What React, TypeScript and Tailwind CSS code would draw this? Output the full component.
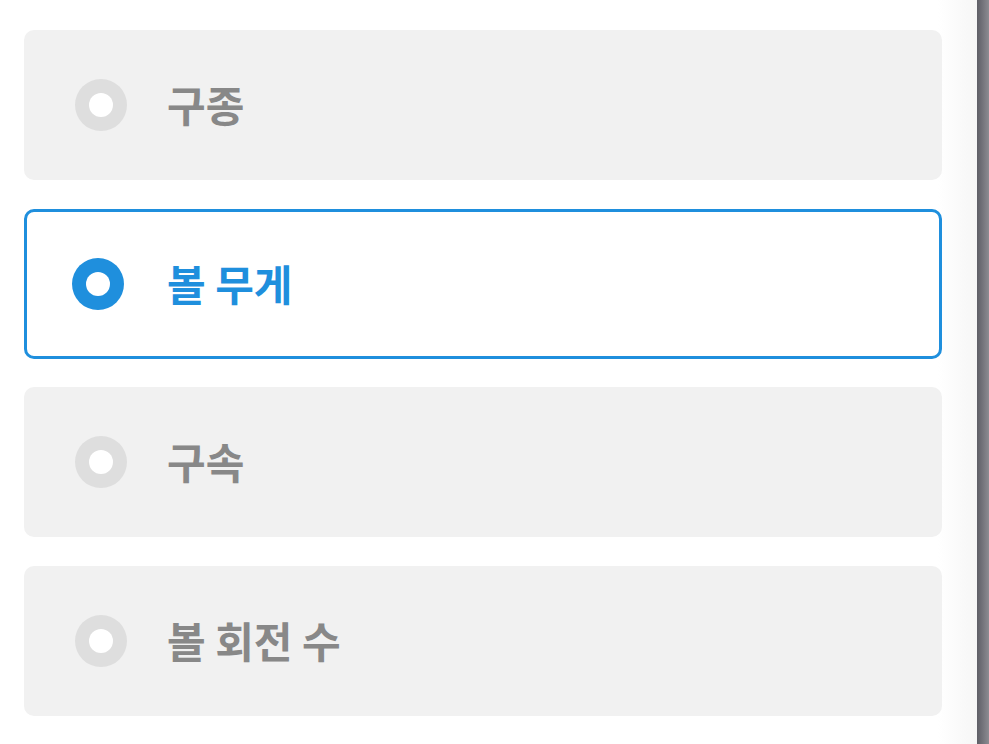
import React, { useState } from "react";

const options = ["구종", "볼 무게", "구속", "볼 회전 수"];

function Radio({ checked }: { checked: boolean }) {
  return (
    <span
      className={
        "flex items-center justify-center w-[52px] h-[52px] rounded-full shrink-0 " +
        (checked ? "bg-[#1f8fdd]" : "bg-[#dedede]")
      }
    >
      <span className="block w-[24px] h-[24px] rounded-full bg-white" />
    </span>
  );
}

export default function App() {
  const [selected, setSelected] = useState(1);

  return (
    <div
      className="flex w-[989px] h-[744px] bg-white overflow-hidden"
      style={{ fontFamily: '"Noto Sans CJK KR", "Noto Sans", sans-serif' }}
    >
      <main className="flex-1 pl-[24px] pt-[30px] bg-gradient-to-r from-white from-[96%] to-[#f6f6f6]">
        <div className="flex flex-col gap-[28.7px] w-[918px]">
          {options.map((label, i) => {
            const on = i === selected;
            return (
              <button
                key={label}
                onClick={() => setSelected(i)}
                className={
                  "flex items-center h-[150px] rounded-[10px] text-left " +
                  (on
                    ? "bg-white border-[3px] border-[#1f8fdd] pl-[45px]"
                    : "bg-[#f1f1f1] pl-[51px]")
                }
              >
                <Radio checked={on} />
                <span
                  className={
                    "text-[42px] leading-none whitespace-pre -mt-[2px] " +
                    (on
                      ? "ml-[43px] font-bold text-[#1f8fdd]"
                      : "ml-[40px] font-semibold text-[#888888]")
                  }
                >
                  {label}
                </span>
              </button>
            );
          })}
        </div>
      </main>
      <div className="w-[12px] h-full bg-gradient-to-r from-[#5e5e66] to-[#8c8c92]" />
    </div>
  );
}
